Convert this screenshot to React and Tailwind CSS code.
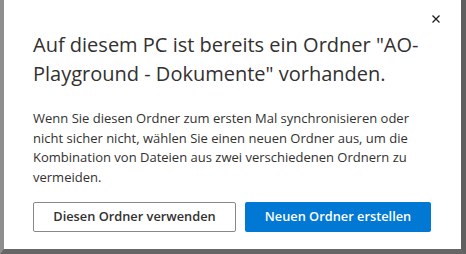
import React from 'react';

const App = () => {
    return (
        <div className="w-[466px] h-[254px] bg-white flex" style={{ fontFamily: '"Open Sans", "Noto Sans", sans-serif' }}>
            <div className="flex-1 flex flex-col border-l-[4px] border-r-[5px] border-b-[5px] border-l-[#8e8e8e] border-r-[#5f5f5f] border-b-[#666666] bg-white">
                <div className="flex justify-end pt-[13px] pr-[19px] h-[30px]">
                    <button className="w-[12px] h-[12px] flex items-center justify-center text-[#201f1e]">
                        <svg width="8" height="8" viewBox="0 0 8 8">
                            <path d="M0.5 0.5 L7.5 7.5 M7.5 0.5 L0.5 7.5" stroke="#201f1e" strokeWidth="1.3" />
                        </svg>
                    </button>
                </div>
                <div className="pl-[29px] pr-[28px]">
                    <h1 className="text-[20px] leading-[29px] text-[#323130] font-normal">
                        Auf diesem PC ist bereits ein Ordner "AO-Playground - Dokumente" vorhanden.
                    </h1>
                    <p className="mt-[21px] text-[13px] leading-[19.5px] text-[#323130]">
                        Wenn Sie diesen Ordner zum ersten Mal synchronisieren oder nicht sicher nicht, wählen Sie einen neuen Ordner aus, um die Kombination von Dateien aus zwei verschiedenen Ordnern zu vermeiden.
                    </p>
                    <div className="mt-[15px] flex gap-[9px]">
                        <button className="w-[203px] h-[30px] border border-[#8a8886] rounded-[2px] text-[12.8px] font-semibold text-[#323130] bg-white">
                            Diesen Ordner verwenden
                        </button>
                        <button className="w-[186px] h-[30px] rounded-[2px] text-[12.8px] font-semibold text-white bg-[#0078d4]">
                            Neuen Ordner erstellen
                        </button>
                    </div>
                </div>
            </div>
        </div>
    );
};

export default App;
